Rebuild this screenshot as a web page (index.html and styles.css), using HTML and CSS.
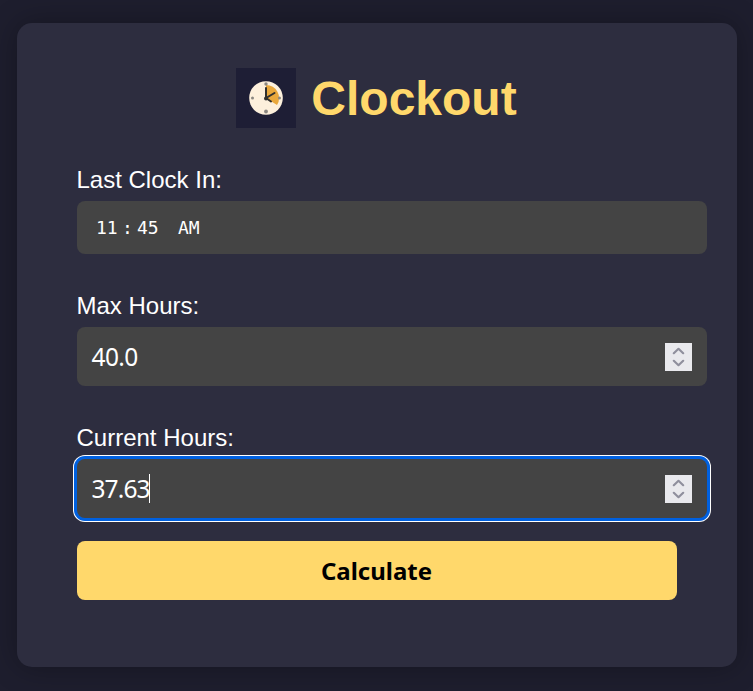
FILE: index.html
```html
<!DOCTYPE html>
<html lang="en">
<head>
<meta charset="utf-8">
<title>Clockout</title>
<link rel="stylesheet" href="styles.css">
</head>
<body>
<main class="card">
  <header class="brand">
    <svg class="logo" viewBox="0 0 60 60" width="60" height="60">
      <rect width="60" height="60" fill="#1e1e35"/>
      <circle cx="30" cy="30" r="16.8" fill="#fdf0dc"/>
      <path d="M30 30V17A13 13 0 0 1 41 37Z" fill="#e9a83c"/>
      <g fill="#8b8781"><circle cx="30" cy="16" r="1.7"/><circle cx="16.5" cy="30" r="1.5"/><circle cx="43.5" cy="30" r="1.5"/><circle cx="30" cy="43.5" r="1.9"/></g>
      <path d="M30 20V30L38.5 25M30 30L35 33.5" fill="none" stroke="#30302f" stroke-width="2" stroke-linecap="round"/>
      <circle cx="30" cy="30.5" r="2" fill="#30302f"/>
    </svg>
    <h1 class="title">Clockout</h1>
  </header>
  <div class="label">Last Clock In:</div>
  <div class="field time"><span class="hour">11</span><span class="colon">:</span><span class="minute">45</span><span>AM</span></div>
  <div class="label">Max Hours:</div>
  <div class="field number"><span class="value">40.0</span>
    <svg class="spinner" viewBox="0 0 27 28"><path d="M8.8 10.2L13.5 5.8L18.2 10.2M8.8 17.8L13.5 22.2L18.2 17.8"/></svg>
  </div>
  <div class="label">Current Hours:</div>
  <div class="field number focused"><span class="value">37.63</span><span class="caret"></span>
    <svg class="spinner" viewBox="0 0 27 28"><path d="M8.8 10.2L13.5 5.8L18.2 10.2M8.8 17.8L13.5 22.2L18.2 17.8"/></svg>
  </div>
  <button class="calculate" type="button">Calculate</button>
</main>
</body>
</html>
```
FILE: styles.css
```css
body {
  margin: 0;
  height: 691px;
  overflow: hidden;
  background: #1e1e2e;
  color: #fff;
  font-family: "Liberation Sans", Arial, sans-serif;
}
.card {
  box-sizing: border-box;
  width: 720px;
  height: 644px;
  margin: 23px 0 0 17px;
  padding: 45px 60px;
  border-radius: 15px;
  background: #2d2d3f;
  box-shadow: 0 0 30px rgba(0, 0, 0, 0.3);
  display: flow-root;
}
.brand {
  display: flex;
  justify-content: center;
  align-items: center;
  gap: 16px;
  height: 60px;
  margin-bottom: 36px;
}
.logo { display: block; }
.title {
  margin: 0;
  color: #ffd86b;
  font-size: 48px;
  line-height: 60px;
  text-indent: -1px;
  padding: 1px 1px 0 0;
}
.label {
  height: 28px;
  margin-bottom: 9px;
  font-size: 24px;
  line-height: 32px;
  text-indent: -0.5px;
}
.field {
  box-sizing: border-box;
  display: flex;
  align-items: center;
  width: 630px;
  padding: 0 15px;
  border-radius: 8px;
  background: #444;
}
.time {
  height: 53px;
  margin-bottom: 36px;
  padding-left: 19px;
  font: 18px "DejaVu Sans Mono", monospace;
}
.hour { width: 26px; }
.colon { width: 15px; }
.minute { width: 41px; }
.number {
  height: 59px;
  margin-bottom: 36px;
  padding-left: 14.5px;
  font: 24.5px "Noto Sans", Tahoma, sans-serif;
}
.value { letter-spacing: -0.6px; }
.focused {
  margin-bottom: 23px;
  box-shadow: 0 0 0 3px #0060df, 0 0 0 4px #fff;
}
.focused .value { letter-spacing: -0.9px; }
.caret {
  width: 1px;
  height: 29px;
  margin-left: -0.5px;
  background: #fff;
}
.spinner {
  width: 27px;
  height: 28px;
  margin-left: auto;
  background: #e9e9ed;
}
.spinner path {
  fill: none;
  stroke: #8f8f9d;
  stroke-width: 2.2;
  stroke-linecap: round;
  stroke-linejoin: round;
}
.calculate {
  display: block;
  width: 600px;
  height: 59px;
  padding: 0 1px 0 0;
  border: 0;
  border-radius: 8px;
  background: #ffd86b;
  color: #000;
  font: bold 24px "Noto Sans", Tahoma, sans-serif;
}
```
